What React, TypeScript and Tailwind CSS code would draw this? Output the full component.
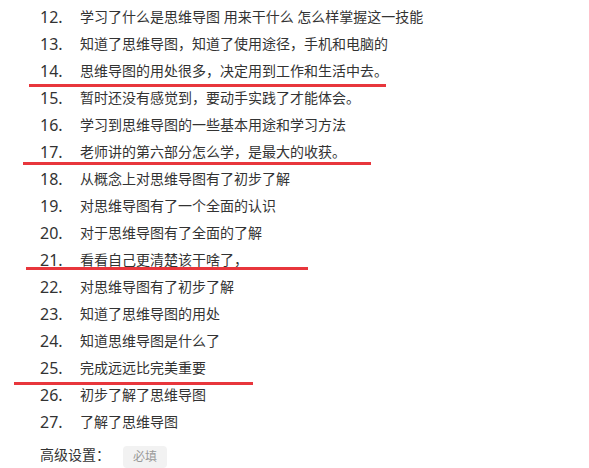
import React from 'react';

const items = [
  '学习了什么是思维导图 用来干什么 怎么样掌握这一技能',
  '知道了思维导图，知道了使用途径，手机和电脑的',
  '思维导图的用处很多，决定用到工作和生活中去。',
  '暂时还没有感觉到，要动手实践了才能体会。',
  '学习到思维导图的一些基本用途和学习方法',
  '老师讲的第六部分怎么学，是最大的收获。',
  '从概念上对思维导图有了初步了解',
  '对思维导图有了一个全面的认识',
  '对于思维导图有了全面的了解',
  '看看自己更清楚该干啥了，',
  '对思维导图有了初步了解',
  '知道了思维导图的用处',
  '知道思维导图是什么了',
  '完成远远比完美重要',
  '初步了解了思维导图',
  '了解了思维导图',
];

export default function App() {
  return (
    <div
      className="relative w-[589px] h-[468px] overflow-hidden bg-white text-[#333]"
      style={{ fontFamily: '"Noto Sans", "Noto Sans CJK SC", sans-serif' }}
    >
      <ol className="pt-[3px] pl-[40px]">
        {items.map((t, i) => (
          <li key={i} className="flex items-center h-[27px]">
            <span className="w-[40px] text-[16px] text-[#333]">{i + 12}.</span>
            <span className="text-[14px] text-[#333]">{t}</span>
          </li>
        ))}
      </ol>

      <div className="flex items-center pl-[40px] mt-[6px] h-[26px]">
        <span className="text-[14px] text-[#333] w-[83px]">高级设置：</span>
        <span className="mt-[6px] px-[10px] h-[22px] flex items-center bg-[#f2f2f2] text-[12px] text-[#999] rounded-sm">
          必填
        </span>
      </div>

      {/* red annotation strokes */}
      <div className="absolute left-[29px] top-[84px] w-[357px] h-[3px] bg-[#e8363c]" />
      <div className="absolute left-[23px] top-[162px] w-[348px] h-[3px] bg-[#e8363c]" />
      <div className="absolute left-[26px] top-[267px] w-[282px] h-[3px] bg-[#e8363c]" />
      <div className="absolute left-[14px] top-[382px] w-[239px] h-[3px] bg-[#e8363c]" />
    </div>
  );
}
